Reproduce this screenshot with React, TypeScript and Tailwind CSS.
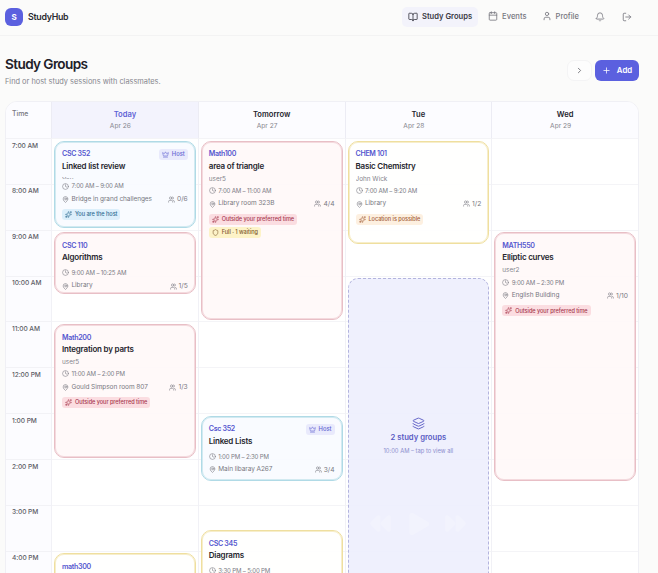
import React from 'react';
import {
  Bell,
  BookOpen,
  Calendar,
  ChevronRight,
  Clock,
  Crown,
  FastForward,
  Layers,
  LogOut,
  MapPin,
  Play,
  Plus,
  Rewind,
  Shield,
  Sparkles,
  User,
  Users,
} from 'lucide-react';

const HOUR_HEIGHT = 45.87;

const hours = [
  '7:00 AM', '8:00 AM', '9:00 AM', '10:00 AM', '11:00 AM',
  '12:00 PM', '1:00 PM', '2:00 PM', '3:00 PM', '4:00 PM',
];

type Tone = 'blue' | 'red' | 'yellow';

interface Badge {
  text: string;
  kind: 'host' | 'outside' | 'location' | 'full';
}

interface Group {
  code: string;
  title?: string;
  user?: string;
  squeezed?: boolean;
  time?: string;
  place?: string;
  count?: string;
  start: number;
  end: number;
  tone: Tone;
  host?: boolean;
  badges?: Badge[];
}

interface Day {
  name: string;
  date: string;
  today?: boolean;
  groups: Group[];
  stack?: { start: number; end: number; label: string; hint: string };
}

const tones: Record<Tone, string> = {
  blue: 'border-[#b0dae6] bg-[#f8fbff]/90 shadow-[inset_0_0_0_1px_#d2eaf1]',
  red: 'border-[#e8bfc6] bg-[#fff8f8]/90 shadow-[inset_0_0_0_1px_#f4dade]',
  yellow: 'border-[#efdf9f] bg-[#fffffe]/90 shadow-[inset_0_0_0_1px_#f7eecb]',
};

const badgeStyles: Record<Badge['kind'], string> = {
  host: 'bg-[#dceffb] text-[#2f6c93]',
  outside: 'bg-[#fbdde1] text-[#a83a50]',
  location: 'bg-[#fdf0e0] text-[#a5623c]',
  full: 'bg-[#fdf3c8] text-[#7d5a2c]',
};

const days: Day[] = [
  {
    name: 'Today',
    date: 'Apr 26',
    today: true,
    groups: [
      {
        code: 'CSC 352', title: 'Linked list review', user: 'You', squeezed: true,
        time: '7:00 AM – 9:00 AM', place: 'Bridge in grand challenges', count: '0/6',
        start: 7, end: 9, tone: 'blue', host: true,
        badges: [{ text: 'You are the host', kind: 'host' }],
      },
      {
        code: 'CSC 110', title: 'Algorithms',
        time: '9:00 AM – 10:25 AM', place: 'Library', count: '1/5',
        start: 9, end: 10.42, tone: 'red',
      },
      {
        code: 'Math200', title: 'Integration by parts', user: 'user5',
        time: '11:00 AM – 2:00 PM', place: 'Gould Simpson room 807', count: '1/3',
        start: 11, end: 14, tone: 'red',
        badges: [{ text: 'Outside your preferred time', kind: 'outside' }],
      },
      { code: 'math300', start: 16, end: 18, tone: 'yellow' },
    ],
  },
  {
    name: 'Tomorrow',
    date: 'Apr 27',
    groups: [
      {
        code: 'Math100', title: 'area of triangle', user: 'user5',
        time: '7:00 AM – 11:00 AM', place: 'Library room 323B', count: '4/4',
        start: 7, end: 11, tone: 'red',
        badges: [
          { text: 'Outside your preferred time', kind: 'outside' },
          { text: 'Full · 1 waiting', kind: 'full' },
        ],
      },
      {
        code: 'Csc 352', title: 'Linked Lists',
        time: '1:00 PM – 2:30 PM', place: 'Main libaray A267', count: '3/4',
        start: 13, end: 14.5, tone: 'blue', host: true,
      },
      {
        code: 'CSC 345', title: 'Diagrams', time: '3:30 PM – 5:00 PM',
        start: 15.5, end: 17, tone: 'yellow',
      },
    ],
  },
  {
    name: 'Tue',
    date: 'Apr 28',
    groups: [
      {
        code: 'CHEM 101', title: 'Basic Chemistry', user: 'John Wick',
        time: '7:00 AM – 9:20 AM', place: 'Library', count: '1/2',
        start: 7, end: 9.33, tone: 'yellow',
        badges: [{ text: 'Location is possible', kind: 'location' }],
      },
    ],
    stack: { start: 10, end: 17.55, label: '2 study groups', hint: '10:00 AM – tap to view all' },
  },
  {
    name: 'Wed',
    date: 'Apr 29',
    groups: [
      {
        code: 'MATH550', title: 'Elliptic curves', user: 'user2',
        time: '9:00 AM – 2:30 PM', place: 'English Building', count: '1/10',
        start: 9, end: 14.5, tone: 'red',
        badges: [{ text: 'Outside your preferred time', kind: 'outside' }],
      },
    ],
  },
];

const placeAt = (start: number, end: number) => ({
  top: (start - 7) * HOUR_HEIGHT + 2.5,
  height: (end - start) * HOUR_HEIGHT - 3.8,
});

const GroupCard: React.FC<{ group: Group }> = ({ group }) => {
  return (
    <div
      className={`absolute inset-x-[2px] overflow-hidden rounded-[10px] border px-[7px] pt-[7px] ${tones[group.tone]}`}
      style={placeAt(group.start, group.end)}
    >
      <div className="flex h-3 items-center justify-between">
        <span className="text-[7.1px] font-semibold tracking-[-0.045em] text-[#5557cf]">{group.code}</span>
        {group.host && (
          <span className="flex h-[11px] items-center gap-[3px] rounded-[3px] bg-[#e9eafc] px-[3px] text-[5.8px] font-medium text-[#6466d2]">
            <Crown size={7} />
            Host
          </span>
        )}
      </div>
      <h3 className="h-[11px] text-[8px] leading-[10px] font-semibold tracking-[-0.025em] text-[#25252d]">{group.title}</h3>
      {group.user && (
        <p
          className={`overflow-hidden text-[6.4px] leading-[10px] text-[#85858d] ${
            group.squeezed ? 'mt-[3px] h-[4px]' : 'mt-[2px] h-[10px]'
          }`}
        >
          {group.user}
        </p>
      )}
      {group.time && (
        <div
          className={`flex h-[11px] items-center gap-[2.5px] text-[6.1px] tracking-[-0.03em] text-[#7c7c85] ${
            group.user ? (group.squeezed ? 'mt-[2px]' : 'mt-[1.5px]') : 'mt-[4px]'
          }`}
        >
          <Clock size={7} />
          {group.time}
        </div>
      )}
      {group.place && (
        <div className="mt-[2.5px] flex h-[11px] items-center justify-between text-[#787881]">
          <span className="flex items-center gap-[2.5px] text-[6.5px] tracking-[-0.01em]">
            <MapPin size={7} />
            {group.place}
          </span>
          <span className="flex items-center gap-[2px] text-[6.7px]">
            <Users size={7} />
            {group.count}
          </span>
        </div>
      )}
      {group.badges && (
        <div className="mt-[4px] flex flex-col items-start gap-[2px]">
          {group.badges.map((badge) => (
            <span
              key={badge.text}
              className={`flex h-[11px] items-center gap-[3px] rounded-[3px] px-[3px] text-[5.6px] font-medium tracking-[-0.01em] ${badgeStyles[badge.kind]}`}
            >
              {badge.kind === 'full' ? <Shield size={7} /> : <Sparkles size={7} />}
              {badge.text}
            </span>
          ))}
        </div>
      )}
    </div>
  );
};

const NavBar: React.FC = () => {
  return (
    <header className="flex h-9 items-center justify-between border-b border-[#f3f3f3] pr-[26px] pl-[5px] pb-[2px]">
      <div className="flex items-center gap-[5px]">
        <div className="flex h-[18px] w-[18px] items-center justify-center rounded-[6px] bg-[#5b60df] text-[8px] font-bold text-white">
          S
        </div>
        <span className="text-[8.8px] font-semibold tracking-[-0.03em] text-[#2a2a30]">StudyHub</span>
      </div>
      <nav className="flex items-center text-[7.6px] font-medium text-[#77777f]">
        <a className="mr-[10px] flex h-5 items-center gap-1 rounded-[5px] bg-[#f3f3fb] px-[6px] font-semibold text-[#3a3a44]">
          <BookOpen size={10} />
          Study Groups
        </a>
        <a className="mr-[15px] flex items-center gap-1">
          <Calendar size={10} />
          Events
        </a>
        <a className="mr-[16px] flex items-center gap-1">
          <User size={10} />
          Profile
        </a>
        <Bell size={10} className="mr-[17px]" />
        <LogOut size={10} />
      </nav>
    </header>
  );
};

const App: React.FC = () => {
  return (
    <div className="h-[573px] w-[658px] overflow-hidden bg-[#fbfbfa] font-['Inter','Liberation_Sans',sans-serif]">
      <NavBar />

      <div className="flex h-[65px] items-center justify-between pr-[19px] pl-[5px]">
        <div className="pt-[6px]">
          <h1 className="text-[13.6px] leading-[18px] font-semibold tracking-[-0.045em] text-[#202028]">Study Groups</h1>
          <p className="mt-[3px] text-[7.4px] leading-[12px] text-[#85858d]">Find or host study sessions with classmates.</p>
        </div>
        <div className="flex gap-[3px] pt-[4px]">
          <button className="flex h-[21px] w-[25px] items-center justify-center rounded-[7px] border border-[#f4f4f5] bg-[#fdfdfd] text-[#55555e]">
            <ChevronRight size={9} />
          </button>
          <button className="flex h-[21px] w-11 items-center justify-center gap-[6px] rounded-[6px] bg-[#5b60df] text-[7.8px] font-semibold text-white">
            <Plus size={9} />
            Add
          </button>
        </div>
      </div>

      <div className="ml-[5px] h-[500px] w-[634px] overflow-hidden rounded-t-[12px] border border-[#f0f0f5] bg-white">
        <div className="grid h-[36px] grid-cols-[45px_repeat(4,minmax(0,1fr))] bg-[#fcfcff]">
          <div className="pt-[7px] pl-[6px] text-[6.9px] font-medium text-[#77777f]">Time</div>
          {days.map((day) => (
            <div
              key={day.name}
              className={`border-l border-[#ececf4] pt-[7px] text-center ${day.today ? 'bg-[#f3f3fd]' : ''}`}
            >
              <div className={`text-[7.6px] leading-[12px] font-semibold ${day.today ? 'text-[#5f62d6]' : 'text-[#25252d]'}`}>
                {day.name}
              </div>
              <div className="pr-[9px] text-[6.6px] leading-[10px] text-[#85858d]">{day.date}</div>
            </div>
          ))}
        </div>

        <div className="grid grid-cols-[45px_repeat(4,minmax(0,1fr))]">
          <div className="bg-[#fcfcff]">
            {hours.map((hour) => (
              <div
                key={hour}
                className="h-[45.87px] border-t border-[#f2f2f6] pt-[2.5px] pl-[6px] text-[6.6px] font-medium tracking-[-0.01em] text-[#5d5d66]"
              >
                {hour}
              </div>
            ))}
          </div>
          {days.map((day) => (
            <div key={day.name} className="relative border-l border-[#f1f1f6]">
              {hours.map((hour) => (
                <div key={hour} className="h-[45.87px] border-t border-[#f4f4f7]" />
              ))}
              {day.groups.map((group) => (
                <GroupCard key={group.code} group={group} />
              ))}
              {day.stack && (
                <div
                  className="absolute inset-x-[2px] flex flex-col items-center rounded-[10px] border border-dashed border-[#b3b4de] bg-[#edeefd]/90 pt-[137.5px] text-[#5a5cc4]"
                  style={placeAt(day.stack.start, day.stack.end)}
                >
                  <Layers size={13} strokeWidth={1.7} />
                  <span className="mt-[2px] text-[7.7px] leading-[12px] font-semibold">{day.stack.label}</span>
                  <span className="mt-[2px] text-[5.8px] leading-[10px] text-[#8b8dcd]">{day.stack.hint}</span>
                  <div className="mt-[53px] flex items-center gap-[10px] text-white/20">
                    <Rewind size={25} fill="currentColor" strokeWidth={0} />
                    <Play size={30} fill="currentColor" strokeWidth={0} />
                    <FastForward size={25} fill="currentColor" strokeWidth={0} />
                  </div>
                </div>
              )}
            </div>
          ))}
        </div>
      </div>
    </div>
  );
};

export default App;
